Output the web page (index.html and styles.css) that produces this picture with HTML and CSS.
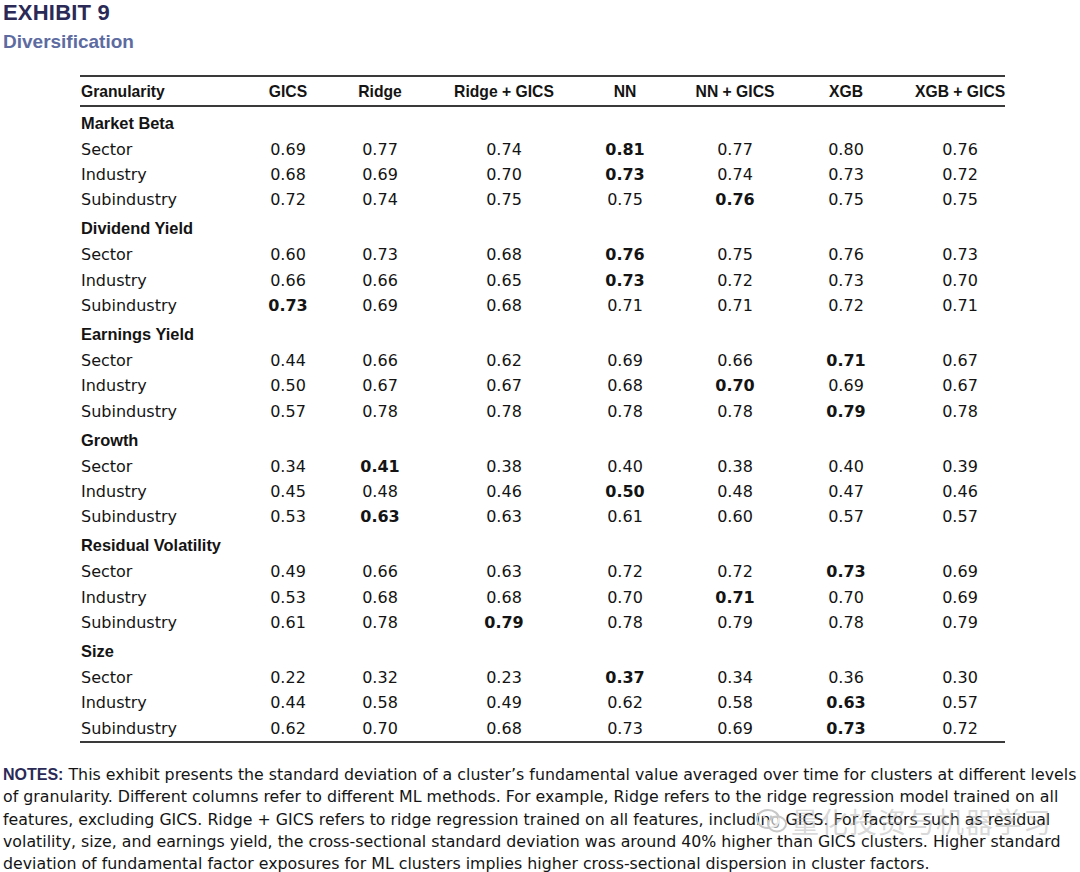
FILE: index.html
```html
<!DOCTYPE html>
<html>
<head>
<meta charset="utf-8">
<link rel="stylesheet" href="styles.css">
</head>
<body>
<div class="page">
  <h1 class="exhibit">EXHIBIT 9</h1>
  <h2 class="subtitle">Diversification</h2>

  <div class="table">
    <div class="row head">
      <div class="c first">Granularity</div>
      <div class="c">GICS</div>
      <div class="c">Ridge</div>
      <div class="c">Ridge + GICS</div>
      <div class="c">NN</div>
      <div class="c">NN + GICS</div>
      <div class="c">XGB</div>
      <div class="c last">XGB + GICS</div>
    </div>

    <div class="row group"><div class="c first">Market Beta</div></div>
    <div class="row"><div class="c first">Sector</div><div class="c">0.69</div><div class="c">0.77</div><div class="c">0.74</div><div class="c b">0.81</div><div class="c">0.77</div><div class="c">0.80</div><div class="c last">0.76</div></div>
    <div class="row"><div class="c first">Industry</div><div class="c">0.68</div><div class="c">0.69</div><div class="c">0.70</div><div class="c b">0.73</div><div class="c">0.74</div><div class="c">0.73</div><div class="c last">0.72</div></div>
    <div class="row"><div class="c first">Subindustry</div><div class="c">0.72</div><div class="c">0.74</div><div class="c">0.75</div><div class="c">0.75</div><div class="c b">0.76</div><div class="c">0.75</div><div class="c last">0.75</div></div>

    <div class="row group"><div class="c first">Dividend Yield</div></div>
    <div class="row"><div class="c first">Sector</div><div class="c">0.60</div><div class="c">0.73</div><div class="c">0.68</div><div class="c b">0.76</div><div class="c">0.75</div><div class="c">0.76</div><div class="c last">0.73</div></div>
    <div class="row"><div class="c first">Industry</div><div class="c">0.66</div><div class="c">0.66</div><div class="c">0.65</div><div class="c b">0.73</div><div class="c">0.72</div><div class="c">0.73</div><div class="c last">0.70</div></div>
    <div class="row"><div class="c first">Subindustry</div><div class="c b">0.73</div><div class="c">0.69</div><div class="c">0.68</div><div class="c">0.71</div><div class="c">0.71</div><div class="c">0.72</div><div class="c last">0.71</div></div>

    <div class="row group"><div class="c first">Earnings Yield</div></div>
    <div class="row"><div class="c first">Sector</div><div class="c">0.44</div><div class="c">0.66</div><div class="c">0.62</div><div class="c">0.69</div><div class="c">0.66</div><div class="c b">0.71</div><div class="c last">0.67</div></div>
    <div class="row"><div class="c first">Industry</div><div class="c">0.50</div><div class="c">0.67</div><div class="c">0.67</div><div class="c">0.68</div><div class="c b">0.70</div><div class="c">0.69</div><div class="c last">0.67</div></div>
    <div class="row"><div class="c first">Subindustry</div><div class="c">0.57</div><div class="c">0.78</div><div class="c">0.78</div><div class="c">0.78</div><div class="c">0.78</div><div class="c b">0.79</div><div class="c last">0.78</div></div>

    <div class="row group"><div class="c first">Growth</div></div>
    <div class="row"><div class="c first">Sector</div><div class="c">0.34</div><div class="c b">0.41</div><div class="c">0.38</div><div class="c">0.40</div><div class="c">0.38</div><div class="c">0.40</div><div class="c last">0.39</div></div>
    <div class="row"><div class="c first">Industry</div><div class="c">0.45</div><div class="c">0.48</div><div class="c">0.46</div><div class="c b">0.50</div><div class="c">0.48</div><div class="c">0.47</div><div class="c last">0.46</div></div>
    <div class="row"><div class="c first">Subindustry</div><div class="c">0.53</div><div class="c b">0.63</div><div class="c">0.63</div><div class="c">0.61</div><div class="c">0.60</div><div class="c">0.57</div><div class="c last">0.57</div></div>

    <div class="row group"><div class="c first">Residual Volatility</div></div>
    <div class="row"><div class="c first">Sector</div><div class="c">0.49</div><div class="c">0.66</div><div class="c">0.63</div><div class="c">0.72</div><div class="c">0.72</div><div class="c b">0.73</div><div class="c last">0.69</div></div>
    <div class="row"><div class="c first">Industry</div><div class="c">0.53</div><div class="c">0.68</div><div class="c">0.68</div><div class="c">0.70</div><div class="c b">0.71</div><div class="c">0.70</div><div class="c last">0.69</div></div>
    <div class="row"><div class="c first">Subindustry</div><div class="c">0.61</div><div class="c">0.78</div><div class="c b">0.79</div><div class="c">0.78</div><div class="c">0.79</div><div class="c">0.78</div><div class="c last">0.79</div></div>

    <div class="row group"><div class="c first">Size</div></div>
    <div class="row"><div class="c first">Sector</div><div class="c">0.22</div><div class="c">0.32</div><div class="c">0.23</div><div class="c b">0.37</div><div class="c">0.34</div><div class="c">0.36</div><div class="c last">0.30</div></div>
    <div class="row"><div class="c first">Industry</div><div class="c">0.44</div><div class="c">0.58</div><div class="c">0.49</div><div class="c">0.62</div><div class="c">0.58</div><div class="c b">0.63</div><div class="c last">0.57</div></div>
    <div class="row"><div class="c first">Subindustry</div><div class="c">0.62</div><div class="c">0.70</div><div class="c">0.68</div><div class="c">0.73</div><div class="c">0.69</div><div class="c b">0.73</div><div class="c last">0.72</div></div>
  </div>

  <div class="notes">
    <span class="line"><span class="notes-label">NOTES:</span> This exhibit presents the standard deviation of a cluster’s fundamental value averaged over time for clusters at different levels</span>
    <span class="line">of granularity. Different columns refer to different ML methods. For example, Ridge refers to the ridge regression model trained on all</span>
    <span class="line">features, excluding GICS. Ridge + GICS refers to ridge regression trained on all features, including GICS. For factors such as residual</span>
    <span class="line">volatility, size, and earnings yield, the cross-sectional standard deviation was around 40% higher than GICS clusters. Higher standard</span>
    <span class="line">deviation of fundamental factor exposures for ML clusters implies higher cross-sectional dispersion in cluster factors.</span>
    <div class="watermark" aria-hidden="true">
      <svg class="wm-logo" width="34" height="28" viewBox="0 0 34 28">
        <ellipse cx="13" cy="12" rx="11" ry="9" fill="none" stroke="#c8c8c8" stroke-width="2"/>
        <ellipse cx="22" cy="17" rx="9" ry="7.5" fill="rgba(255,255,255,0.6)" stroke="#c8c8c8" stroke-width="2"/>
        <circle cx="9" cy="10" r="1.4" fill="#c8c8c8"/>
        <circle cx="16" cy="10" r="1.4" fill="#c8c8c8"/>
      </svg>
      <span class="wm-text">量化投资与机器学习</span>
    </div>
  </div>
</div>
</body>
</html>
```

FILE: styles.css
```css
* { box-sizing: border-box; }

html, body {
  margin: 0;
  padding: 0;
  background: #ffffff;
}

.page {
  width: 1080px;
  padding: 0 0 0 3px;
  color: #141414;
}

.exhibit {
  margin: 0;
  padding-top: 1px;
  font-family: "Liberation Sans", Arial, sans-serif;
  font-weight: bold;
  font-size: 22px;
  line-height: 24px;
  letter-spacing: 0.2px;
  color: #2b2a57;
}

.subtitle {
  margin: 6px 0 0 0;
  font-family: "Liberation Sans", Arial, sans-serif;
  font-weight: bold;
  font-size: 19px;
  line-height: 22px;
  color: #5d6ba1;
}

.table {
  margin: 22px 0 0 77px;
  width: 925px;
  border-top: 2px solid #3a3a3a;
  border-bottom: 2px solid #3a3a3a;
}

.row {
  display: grid;
  grid-template-columns: 164px 88px 96px 152px 90px 130px 92px 113px;
  align-items: center;
  height: 25.4px;
  font-family: "DejaVu Sans", Verdana, sans-serif;
  font-size: 16px;
  color: #141414;
}

.row.head {
  height: 27px;
  border-bottom: 2px solid #3a3a3a;
  font-family: "Liberation Sans", Arial, sans-serif;
  font-weight: bold;
  font-size: 15.7px;
  box-sizing: content-box;
  padding-top: 1px;
}

.row.group {
  height: 29.5px;
  padding-top: 3px;
  font-family: "Liberation Sans", Arial, sans-serif;
  font-weight: bold;
  font-size: 16.4px;
}

.c {
  text-align: center;
  white-space: nowrap;
}

.c.first {
  text-align: left;
  padding-left: 1px;
}

.c.last {
  padding-left: 23px;
}

.c.b {
  font-weight: bold;
}

.notes {
  position: relative;
  margin-top: 21px;
  font-family: "DejaVu Sans", Verdana, sans-serif;
  font-size: 15.8px;
  line-height: 22.3px;
  color: #141414;
}

.notes .line {
  display: block;
  white-space: nowrap;
}

.notes-label {
  font-family: "Liberation Sans", Arial, sans-serif;
  font-weight: bold;
  font-size: 16px;
  color: #2b2a57;
}

.watermark {
  position: absolute;
  left: 752px;
  top: 42px;
  display: flex;
  align-items: center;
  gap: 2px;
  pointer-events: none;
}

.wm-text {
  font-family: "Noto Sans CJK SC", sans-serif;
  font-size: 28px;
  line-height: 30px;
  letter-spacing: 1px;
  color: rgba(170, 170, 170, 0.45);
}
```
